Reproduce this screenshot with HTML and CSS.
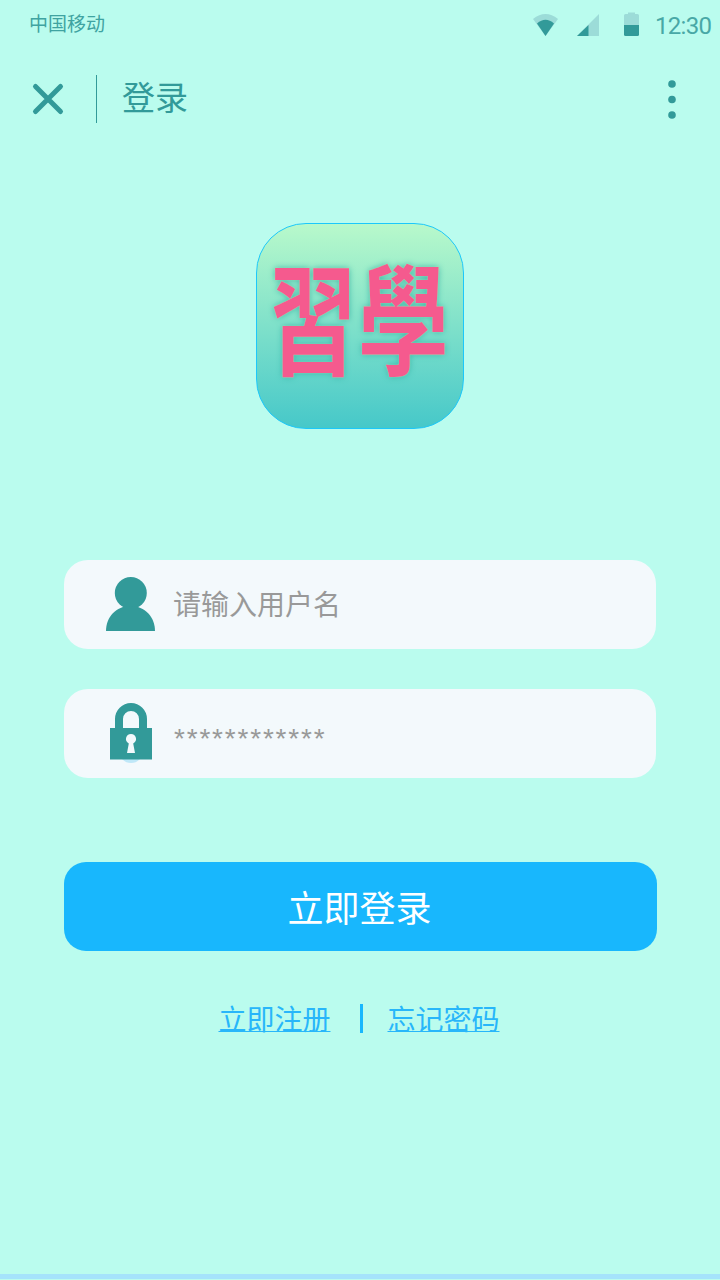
FILE: index.html
```html
<!DOCTYPE html>
<html lang="zh-CN">
<head>
<meta charset="utf-8">
<title>登录</title>
<link rel="stylesheet" href="styles.css">
</head>
<body>
<div class="page">
  <header class="status">
    <span class="carrier">中国移动</span>
    <div class="status-right">
      <svg class="ic-wifi" width="26" height="24" viewBox="0 0 26 24"><path class="lt" d="M0 7Q12.500 -3 25 7L12.500 24Z"/><path class="dk" d="M4 11.500Q12.500 4 21 11.500L12.500 24Z"/></svg>
      <svg class="ic-signal" width="22" height="24" viewBox="0 0 22 24"><path class="lt" d="M0 24L22 2V24Z"/><path class="dk" d="M0 24L11.500 13V24Z"/></svg>
      <svg class="ic-batt" width="15" height="24" viewBox="0 0 15 24"><path class="lt" d="M4 0.500H11V2H13.500Q15 2 15 3.500V13H0V3.500Q0 2 1.500 2H4Z"/><path class="dk" d="M0 13H15V22.500Q15 24 13.500 24H1.500Q0 24 0 22.500Z"/></svg>
      <span class="time">12:30</span>
    </div>
  </header>
  <nav class="nav">
    <svg class="ic-close" width="34" height="34" viewBox="0 0 34 34"><path d="M4.500 4.500L29.500 29.500M29.500 4.500L4.500 29.500"/></svg>
    <span class="nav-divider"></span>
    <span class="nav-title">登录</span>
    <svg class="ic-more" width="8" height="39" viewBox="0 0 8 39"><circle cx="4" cy="4" r="3.800"/><circle cx="4" cy="19.500" r="3.800"/><circle cx="4" cy="35" r="3.800"/></svg>
  </nav>
  <main class="main">
    <div class="logo"><span class="logo-text">習學</span></div>
    <form class="form">
      <div class="field">
        <svg class="field-ic field-ic-user" width="49" height="54" viewBox="0 0 49 54"><circle cx="24.800" cy="16" r="16"/><path d="M0 54C0 40 10 29 24.500 29S49 40 49 54Z"/></svg>
        <span class="field-text">请输入用户名</span>
      </div>
      <div class="field">
        <svg class="field-ic field-ic-lock" width="49" height="62" viewBox="0 0 49 62"><circle class="halo" cx="25" cy="48" r="12"/><path fill-rule="evenodd" d="M4 25H9V16A16 16 0 0 1 41 16V25H46V56.500H4ZM17 25H33V16A8 8 0 0 0 17 16Z"/><path class="keyhole" d="M25 31A5 5 0 0 0 22.800 40.500L21 50H29L27.200 40.500A5 5 0 0 0 25 31Z"/></svg>
        <span class="field-text field-stars">************</span>
      </div>
      <button class="submit" type="button">立即登录</button>
      <div class="links">
        <a class="link" href="#">立即注册</a>
        <span class="links-sep"></span>
        <a class="link" href="#">忘记密码</a>
      </div>
    </form>
  </main>
  <div class="bottom-strip"></div>
</div>
</body>
</html>
```
FILE: styles.css
```css
* { box-sizing: border-box; }
html, body { margin: 0; padding: 0; }
body {
  background: #baFCEE;
  font-family: "Noto Sans CJK SC", "Noto Sans", sans-serif;
}
.page {
  width: 720px;
  height: 1280px;
  display: flex;
  flex-direction: column;
  overflow: hidden;
}
.status {
  height: 49px;
  flex: none;
  display: flex;
  align-items: center;
  justify-content: space-between;
  padding: 0 9px 1px 29px;
}
.carrier { font-size: 19px; line-height: 24px; color: #329a99; opacity: .9; margin-bottom: 2px; }
.status-right { display: flex; align-items: center; }
.status-right svg { display: block; }
.lt { fill: #9cdcd8; }
.dk { fill: #329a99; }
.ic-wifi { margin-right: 18px; }
.ic-signal { margin-right: 25px; }
.ic-batt { margin-right: 16px; }
.time {
  font-family: Roboto, sans-serif;
  font-size: 24px;
  line-height: 28px;
  letter-spacing: -0.700px;
  color: #48a8a6;
  width: 56px;
  margin-top: 3px;
}
.nav {
  height: 100px;
  flex: none;
  display: flex;
  align-items: center;
  padding: 0 44px 0 31px;
}
.ic-close { display: block; }
.ic-close path { fill: none; stroke: #329a99; stroke-width: 5px; stroke-linecap: round; }
.nav-divider { width: 1px; height: 48px; background: #329a99; margin-left: 31px; }
.nav-title { font-size: 33px; line-height: 44px; color: #329a99; margin: 0 0 6px 25px; flex: 1; }
.ic-more { display: block; fill: #329a99; }
.main { display: flex; flex-direction: column; align-items: center; }
.logo {
  width: 208px;
  height: 206px;
  margin-top: 74px;
  border: 1px solid #1cc8fb;
  border-radius: 50px;
  background: linear-gradient(#b8f9cb, #46c8c9);
  display: flex;
  align-items: center;
  justify-content: center;
}
.logo-text {
  font-family: "Noto Sans CJK TC", sans-serif;
  font-weight: 700;
  font-size: 86px;
  line-height: 120px;
  color: #f55a8e;
  text-shadow: 0 0 1px #d8e8b0, 0 0 5px #3ab5a8;
  transform: translate(-2px, -12px) scale(1.055, 1.4);
}
.form { width: 592px; margin-top: 131px; display: flex; flex-direction: column; }
.field {
  height: 89px;
  margin-bottom: 40px;
  background: #f3f9fc;
  border-radius: 24px;
  display: flex;
  align-items: center;
  padding-left: 42px;
}
.field-ic { display: block; fill: #329a99; flex: none; }
.field-ic-user { margin-top: -1px; }
.field-ic-lock { margin-top: 1px; }
.halo { fill: #bfe8f8; }
.keyhole { fill: #f3f9fc; }
.field-text { font-size: 28px; line-height: 40px; color: #999; margin: 0 0 4px 18px; }
.field-stars { font-family: "Liberation Sans", sans-serif; letter-spacing: 1.800px; margin: 0 0 0 19px; padding-top: 10px; }
.submit {
  height: 89px;
  width: 593px;
  margin-top: 44px;
  border: 0;
  padding: 0 2px 2px 0;
  border-radius: 22px;
  background: #18b7fd;
  color: #fff;
  font-family: inherit;
  font-size: 36px;
  line-height: 48px;
}
.links {
  margin-top: 47px;
  padding-right: 2px;
  display: flex;
  justify-content: center;
  align-items: center;
}
.link { font-size: 28px; line-height: 40px; color: #28b6fa; text-decoration: underline; text-decoration-thickness: 1px; }
.links-sep { width: 3px; height: 29px; background: #18b7fd; margin: 0 25px 0 29px; }
.bottom-strip { height: 5px; margin-top: auto; margin-bottom: 1px; background: #a5e3fb; flex: none; }
```
